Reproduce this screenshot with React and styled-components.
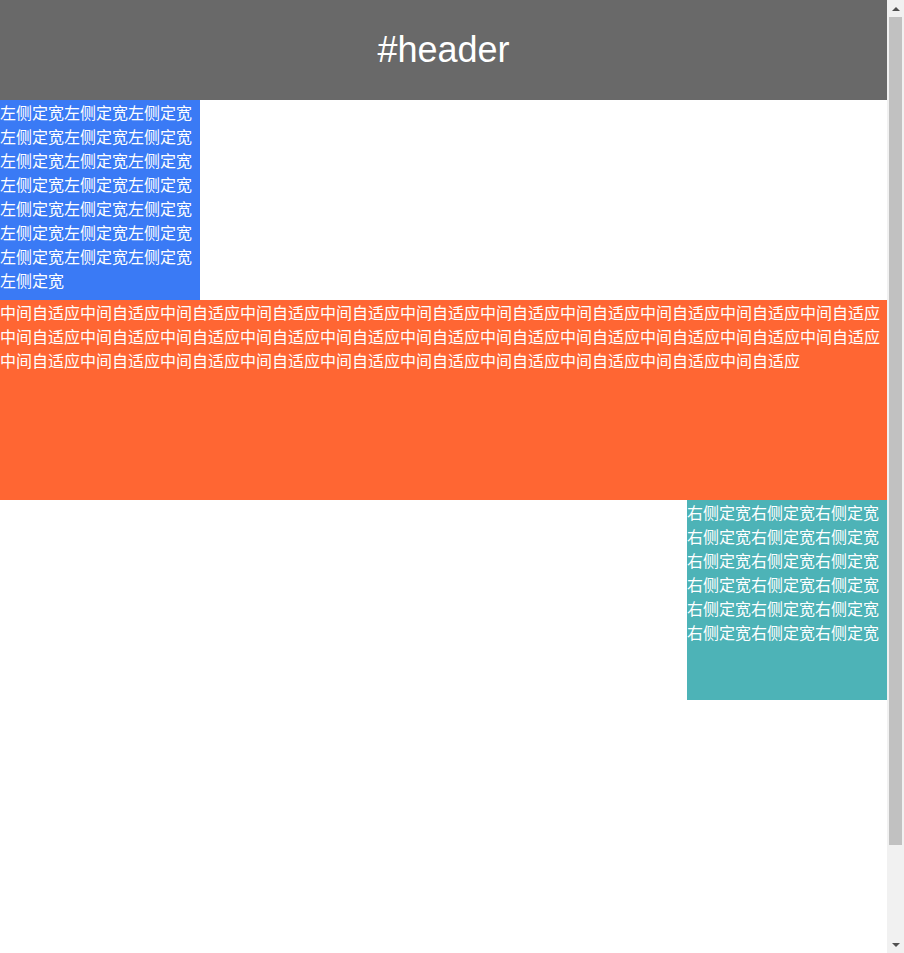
import styled, { createGlobalStyle } from 'styled-components';

const GlobalStyle = createGlobalStyle`
  html, body {
    margin: 0;
    padding: 0;
    height: 100%;
  }
  #root {
    height: 100%;
  }
`;

const Page = styled.div`
  display: flex;
  flex-direction: column;
  height: 100%;
  width: calc(100% - 17px);
  font-family: "Noto Sans CJK SC", "Liberation Sans", sans-serif;
  font-size: 16px;
  line-height: 24px;
  color: #fff;
`;

const Header = styled.div`
  flex: 0 0 100px;
  background-color: #696969;
  text-align: center;
  line-height: 100px;
  font-family: "Liberation Sans", Arial, sans-serif;
  font-size: 36px;
`;

const Body = styled.div`
  flex: 0 0 100%;
  display: flex;
  flex-direction: column;
`;

const Column = styled.div`
  height: 200px;
  width: ${(p) => (p.$fixed ? '200px' : 'auto')};
  align-self: ${(p) => p.$align || 'stretch'};
  background-color: ${(p) => p.$bg};
  overflow: hidden;
  word-break: break-all;
`;

// window scrollbar as drawn by the browser
const ScrollTrack = styled.div`
  position: fixed;
  top: 0;
  right: 0;
  width: 17px;
  height: 100vh;
  background-color: #f1f1f1;
  display: flex;
  flex-direction: column;
  align-items: center;
`;

const Arrow = styled.div`
  flex: 0 0 17px;
  display: flex;
  align-items: center;
  justify-content: center;

  &::before {
    content: '';
    border-left: 4px solid transparent;
    border-right: 4px solid transparent;
    ${(p) => (p.$down ? 'border-top: 4px solid #505050;' : 'border-bottom: 4px solid #505050;')}
  }
`;

const Thumb = styled.div`
  width: 13px;
  height: 828px;
  background-color: #c1c1c1;
`;

const Spacer = styled.div`
  flex: 1;
`;

const App = () => {
  return (
    <>
      <GlobalStyle />
      <Page>
        <Header>#header</Header>
        <Body>
          <Column $fixed $align="flex-start" $bg="#3a7af5">
            {'左侧定宽'.repeat(22)}
          </Column>
          <Column $bg="#ff6633">{'中间自适应'.repeat(32)}</Column>
          <Column $fixed $align="flex-end" $bg="#4db3b7">
            {'右侧定宽'.repeat(18)}
          </Column>
        </Body>
      </Page>
      <ScrollTrack>
        <Arrow />
        <Thumb />
        <Spacer />
        <Arrow $down />
      </ScrollTrack>
    </>
  );
};

export default App;
